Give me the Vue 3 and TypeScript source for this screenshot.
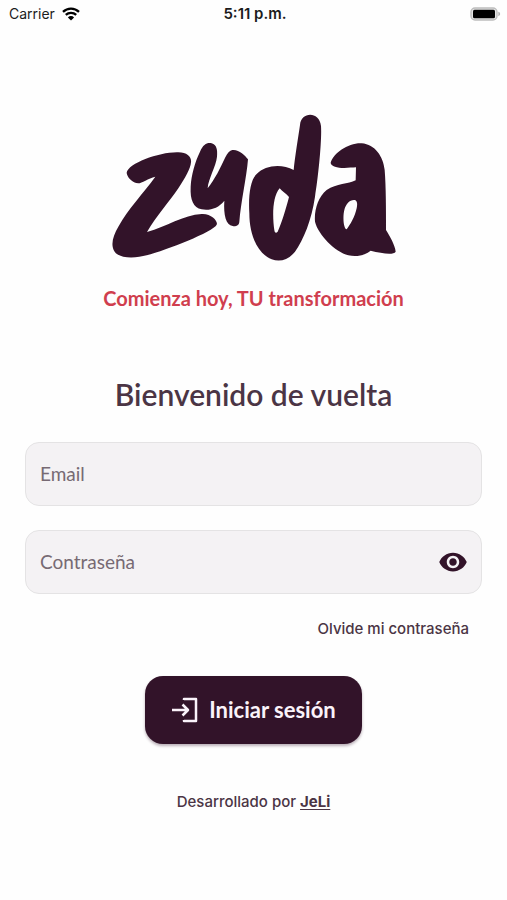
<script setup lang="ts">
import { ref } from 'vue'

const email = ref('')
const password = ref('')
const showPassword = ref(false)
</script>

<template>
  <div class="screen">
    <header class="status">
      <div class="carrier">
        <span>Carrier</span>
        <svg class="wifi" viewBox="0 0 18 14" aria-hidden="true">
          <path d="M1 4.8a11.6 11.6 0 0 1 16 0M3.8 7.9a7.5 7.5 0 0 1 10.4 0" fill="none" stroke="#000" stroke-width="2.3" />
          <path d="M9 13.6 5.9 10.4a4.4 4.4 0 0 1 6.2 0Z" fill="#000" />
        </svg>
      </div>
      <time class="clock">5:11 p.m.</time>
      <svg class="battery" viewBox="0 0 31 15" aria-label="Battery full">
        <rect x="1" y="1" width="26" height="12" rx="4" fill="#e4e4e4" stroke="#bdbdbd" stroke-width="1.4" />
        <rect x="3" y="2.7" width="22" height="8.6" rx="1.5" fill="#000" />
        <path d="M28.3 4.8c2.4.6 2.4 3.8 0 4.4Z" fill="#b0b0b0" />
      </svg>
    </header>

    <main class="content">
      <svg class="logo" viewBox="36 42 852 444" role="img" aria-label="zuda">
        <path d="M80 218C85 190 180 155 235 157C262 158 275 170 273 187C272 205 255 235 235 265C207 306 168 350 141 396C200 380 250 345 305 342C335 340 355 365 350 374C340 395 200 450 140 466C110 474 60 478 44 455C30 435 40 405 55 380C85 325 130 280 166 230C145 235 125 250 115 250C98 250 80 230 80 218Z" />
        <path d="M300 155C310 130 325 126 335 130C350 134 353 150 351 170C348 200 325 235 323 265C345 238 362 202 376 172C382 159 389 152 397 150C415 147 435 165 444 178C440 230 422 310 418 365C417 378 405 380 398 378C378 375 370 345 373 302C355 325 330 332 305 328C280 322 270 300 272 260C274 225 285 185 300 155Z" />
        <g transform="translate(420 0)" fill-rule="evenodd">
          <path d="M180 75C183 35 238 33 243 78C246 120 235 230 225 290C215 360 190 420 165 455C145 480 120 487 95 478C50 460 28 400 28 340C25 290 30 240 50 222C75 195 125 190 161 210C165 170 175 110 180 75ZM119 265C97 290 97 350 103 390C104 398 108 401 113 395C125 370 138 325 147 291C138 281 127 275 119 265Z" />
          <path d="M272 188C280 160 325 128 365 130C405 133 430 170 434 210C438 260 438 330 438 390C450 410 465 435 467 455C460 466 425 460 392 452C375 466 350 472 325 466C285 455 235 405 225 365C222 330 235 290 260 270C290 250 325 253 347 241L348 202C330 203 300 206 285 200C277 197 272 193 272 188ZM345 300C330 298 318 310 313 330C308 350 310 385 320 388C330 375 345 350 350 325C352 315 353 303 345 300Z" />
        </g>
      </svg>
      <p class="tagline">Comienza hoy, TU transformación</p>

      <h1 class="title">Bienvenido de vuelta</h1>

      <form class="form" @submit.prevent>
        <div class="field">
          <input v-model="email" type="email" placeholder="Email" aria-label="Email" />
        </div>
        <div class="field">
          <input v-model="password" :type="showPassword ? 'text' : 'password'" placeholder="Contraseña" aria-label="Contraseña" />
          <button class="eye" type="button" aria-label="Mostrar contraseña" @click="showPassword = !showPassword">
            <svg viewBox="0 0 24 24" aria-hidden="true">
              <path d="M12 4.5C7 4.5 2.73 7.61 1 12c1.73 4.39 6 7.5 11 7.5s9.27-3.11 11-7.5c-1.73-4.39-6-7.5-11-7.5zM12 17c-2.76 0-5-2.24-5-5s2.24-5 5-5 5 2.24 5 5-2.24 5-5 5zm0-8c-1.66 0-3 1.34-3 3s1.34 3 3 3 3-1.34 3-3-1.34-3-3-3z" />
            </svg>
          </button>
        </div>
        <a class="forgot" href="#">Olvide mi contraseña</a>
        <button class="submit" type="submit">
          <svg viewBox="0 0 28 26" aria-hidden="true">
            <path d="M13 3V2H25V24H13V23M1 13H17M11.5 7.500 17 13 11.5 18.500" />
          </svg>
          <span>Iniciar sesión</span>
        </button>
      </form>
    </main>

    <footer class="credit">Desarrollado por <a href="#">JeLi</a></footer>
  </div>
</template>

<style>
body {
  margin: 0;
  background: #fefefe;
}
</style>

<style scoped>
.screen {
  min-height: 100vh;
  box-sizing: border-box;
  color: #4b3545;
  font-family: Lato, "Open Sans", sans-serif;
}

.status {
  display: grid;
  grid-template-columns: 1fr auto 1fr;
  align-items: center;
  height: 28px;
  padding: 0 6px 0 9px;
  color: #1c1c1c;
  font: 14px/28px Inter, sans-serif;
}

.carrier {
  display: flex;
  align-items: center;
  gap: 7px;
}

.wifi {
  width: 18px;
  height: 14px;
}

.clock {
  font-size: 15px;
  font-weight: 600;
}

.battery {
  justify-self: end;
  width: 31px;
  height: 15px;
}

.content {
  display: flex;
  flex-direction: column;
  align-items: center;
  padding: 86px 25px 0;
}

.logo {
  width: 284px;
  height: 148px;
  fill: #321329;
}

.tagline {
  margin: 23px 0 0;
  color: #d03e4e;
  font-size: 20px;
  font-weight: 700;
  line-height: 26px;
}

.title {
  margin: 63px 0 0;
  font-size: 30px;
  font-weight: 600;
  line-height: 40px;
}

.form {
  display: flex;
  flex-direction: column;
  align-items: center;
  align-self: stretch;
  gap: 24px;
  margin-top: 28px;
}

.field {
  display: flex;
  align-items: center;
  align-self: stretch;
  box-sizing: border-box;
  height: 64px;
  padding: 0 13px 0 14px;
  border: 1px solid #e4e3e4;
  border-radius: 14px;
  background: #f4f2f4;
}

.field input {
  flex: 1;
  min-width: 0;
  padding: 0;
  border: 0;
  outline: 0;
  background: transparent;
  color: #321329;
  font: 19px/26px Lato, "Open Sans", sans-serif;
}

.field input::placeholder {
  color: #776a73;
  opacity: 1;
}

.eye {
  display: flex;
  padding: 0;
  border: 0;
  background: none;
}

.eye svg {
  width: 30px;
  height: 30px;
  fill: #321329;
}

.forgot {
  align-self: flex-end;
  margin-right: 13px;
  color: #4b3545;
  font: 500 15px/22px Inter, sans-serif;
  text-decoration: none;
}

.submit {
  display: flex;
  align-items: center;
  justify-content: center;
  gap: 10px;
  height: 68px;
  margin-top: 12px;
  padding: 0 26px;
  border: 0;
  border-radius: 18px;
  background: #321329;
  box-shadow: 0 2px 3px #32132955;
  color: #fbf3fa;
  font: 700 22px/28px Lato, "Open Sans", sans-serif;
}

.submit svg {
  width: 28px;
  height: 26px;
  fill: none;
  stroke: #fbf3fa;
  stroke-width: 2.5;
  stroke-linejoin: round;
}

.credit {
  padding: 47px 0 24px;
  font: 500 15px/22px Inter, sans-serif;
  text-align: center;
}

.credit a {
  color: #4b3545;
  font-weight: 700;
  text-underline-offset: 2px;
}
</style>
